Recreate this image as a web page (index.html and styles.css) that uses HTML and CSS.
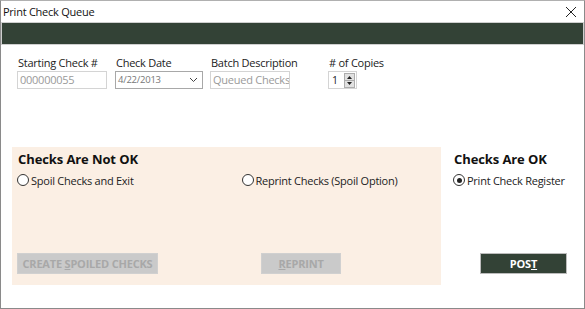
FILE: index.html
```html
<!DOCTYPE html>
<html lang="en">
<head>
  <meta charset="UTF-8">
  <title>Print Check Queue</title>
  <link rel="stylesheet" href="styles.css">
</head>
<body>
  <div class="window">
    <div class="titlebar">
      <span class="title">Print Check Queue</span>
      <svg class="close" width="12" height="12" viewBox="0 0 12 12">
        <path d="M1 1 L11 11 M11 1 L1 11" stroke="#222" stroke-width="1" fill="none"/>
      </svg>
    </div>
    <div class="banner"></div>

    <div class="fields">
      <div class="field f-start">
        <label>Starting Check #</label>
        <div class="input">000000055</div>
      </div>
      <div class="field f-date">
        <label>Check Date</label>
        <div class="input select">
          <span>4/22/2013</span>
          <svg width="9" height="6" viewBox="0 0 9 6"><path d="M1 1 L4.5 4.5 L8 1" stroke="#444" fill="none"/></svg>
        </div>
      </div>
      <div class="field f-batch">
        <label>Batch Description</label>
        <div class="input">Queued Checks</div>
      </div>
      <div class="field f-copies">
        <label># of Copies</label>
        <div class="spin">
          <span class="spin-value">1</span>
          <span class="spin-btns">
            <svg width="11" height="15" viewBox="0 0 11 15">
              <rect x="0.5" y="0.5" width="10" height="14" fill="#e1e1e1" stroke="#adadad"/>
              <path d="M3 6 L5.5 3 L8 6 Z M3 9 L5.5 12 L8 9 Z" fill="#222"/>
              <path d="M1 7.5 H10" stroke="#adadad"/>
            </svg>
          </span>
        </div>
      </div>
    </div>

    <div class="options">
      <div class="panel-bad">
        <h3>Checks Are Not OK</h3>
        <div class="radio-row">
          <label class="radio"><span class="dot"></span>Spoil Checks and Exit</label>
          <label class="radio reprint"><span class="dot"></span>Reprint Checks (Spoil Option)</label>
        </div>
        <div class="button-row">
          <button class="btn disabled btn-spoil">CREATE <u>S</u>POILED CHECKS</button>
          <button class="btn disabled btn-reprint"><u>R</u>EPRINT</button>
        </div>
      </div>
      <div class="panel-ok">
        <h3>Checks Are OK</h3>
        <label class="radio"><span class="dot checked"></span>Print Check Register</label>
        <button class="btn primary">POS<u>T</u></button>
      </div>
    </div>
  </div>
</body>
</html>
```

FILE: styles.css
```css
body {
  margin: 0;
  font-family: "Open Sans", "Noto Sans", sans-serif;
  font-size: 11px;
  letter-spacing: -0.25px;
  color: #222;
  background: #fff;
}
.window {
  width: 585px;
  height: 309px;
  box-sizing: border-box;
  border: 1px solid #8a8a8a;
  border-top-color: #b0b0b0;
  display: flex;
  flex-direction: column;
}
.titlebar {
  height: 21px;
  display: flex;
  align-items: center;
  justify-content: space-between;
  padding: 0 7px 0 2px;
}
.title {
  font-size: 11px;
  color: #111;
}
.close {
  margin-top: 1px;
}
.banner {
  height: 21px;
  background-color: #334236;
  border: 1px solid #cfcfcf;
  margin: 0;
}
.fields {
  display: flex;
  padding: 10px 0 0 16px;
}
.field {
  display: flex;
  flex-direction: column;
}
.field label {
  height: 16px;
  line-height: 16px;
  color: #222;
  padding-left: 1px;
  white-space: nowrap;
}
.f-start { width: 98px; }
.f-date { width: 95px; }
.f-batch { width: 118px; }
.input {
  box-sizing: border-box;
  height: 18px;
  border: 1px solid #d4d4d4;
  color: #9a9a9a;
  line-height: 16px;
  padding-left: 2px;
  font-size: 11px;
  white-space: nowrap;
  overflow: hidden;
}
.f-start .input { width: 90px; }
.f-batch .input { width: 80px; }
.select {
  width: 88px;
  display: flex;
  justify-content: space-between;
  align-items: center;
  border-color: #a8a8a8;
  color: #777;
  font-size: 9.5px;
  padding-right: 4px;
}
.spin {
  display: flex;
  align-items: center;
  width: 29px;
  height: 18px;
  box-sizing: border-box;
  border: 1px solid #d4d4d4;
  padding: 0 1px 0 3px;
  justify-content: space-between;
  font-size: 10.5px;
}
.spin-btns {
  display: flex;
}
.options {
  display: flex;
  margin-top: 58px;
}
.panel-bad {
  margin-left: 11px;
  width: 429px;
  height: 138px;
  background-color: #fbefe4;
  box-sizing: border-box;
  padding: 3px 5px 0 5px;
  display: flex;
  flex-direction: column;
}
h3 {
  margin: 0;
  font-size: 13px;
  font-weight: bold;
  letter-spacing: -0.1px;
  color: #111;
  line-height: 18px;
  padding-left: 1px;
}
.radio-row {
  display: flex;
  margin-top: 4px;
}
.radio {
  display: flex;
  align-items: center;
  height: 16px;
  color: #222;
  white-space: nowrap;
}
.reprint {
  margin-left: 108px;
}
.dot {
  width: 10px;
  height: 10px;
  border: 1px solid #333;
  border-radius: 50%;
  margin: 0 2px 0 0;
  background: #fff;
  position: relative;
}
.dot.checked::after {
  content: "";
  position: absolute;
  left: 2.5px;
  top: 2.5px;
  width: 5px;
  height: 5px;
  border-radius: 50%;
  background: #222;
}
.button-row {
  display: flex;
  margin-top: 65px;
}
.btn {
  height: 21px;
  box-sizing: border-box;
  font-family: "Open Sans", "Noto Sans", sans-serif;
  font-size: 11px;
  font-weight: bold;
  letter-spacing: -0.2px;
  padding: 0;
  border: 1px solid #d6d6d6;
}
.btn u {
  text-underline-offset: 1px;
}
.disabled {
  background-color: #cacaca;
  color: #a8a8a8;
  border-color: #d0d0d0;
}
.btn-spoil { width: 141px; }
.btn-reprint {
  width: 80px;
  margin-left: 103px;
}
.panel-ok {
  padding: 3px 0 0 12px;
  display: flex;
  flex-direction: column;
  align-items: flex-start;
}
.panel-ok .radio {
  margin-top: 4px;
}
.primary {
  width: 87px;
  background-color: #334236;
  color: #fff;
  border-color: #bcbcbc;
  margin: 65px 0 0 27px;
}
```
